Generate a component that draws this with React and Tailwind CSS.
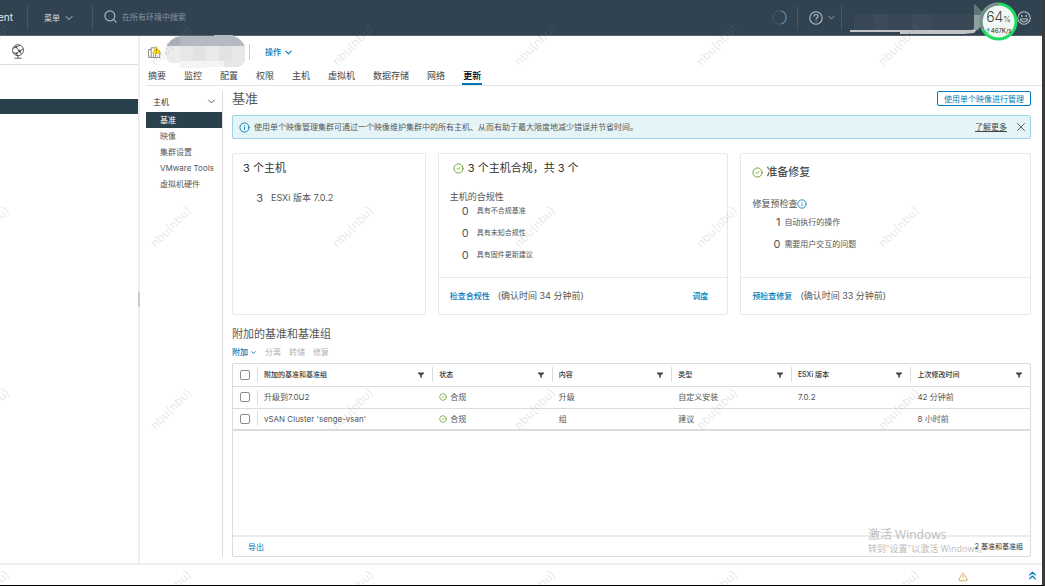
import React, { useState } from "react";
import { ChevronDown, ChevronsUp, CircleCheck, Info, Search, TriangleAlert, X } from "lucide-react";

const tabs = ["摘要", "监控", "配置", "权限", "主机", "虚拟机", "数据存储", "网络", "更新"];
const hostMenu = ["基准", "映像", "集群设置", "VMware Tools", "虚拟机硬件"];

const columns = [
  { key: "name", label: "附加的基准和基准组", width: "w-[22%]" },
  { key: "status", label: "状态", width: "w-[15%]" },
  { key: "content", label: "内容", width: "w-[15%]" },
  { key: "type", label: "类型", width: "w-[15%]" },
  { key: "version", label: "ESXi 版本", width: "w-[15%]" },
  { key: "modified", label: "上次修改时间", width: "w-[15%]" },
];

const baselines = [
  { name: "升级到7.0U2", status: "合规", content: "升级", type: "自定义安装", version: "7.0.2", modified: "42 分钟前" },
  { name: "vSAN Cluster 'senge-vsan'", status: "合规", content: "组", type: "建议", version: "", modified: "8 小时前" },
];

const watermarkX = [-11, 171, 353, 535, 717, 899];
const watermarkY = [45, 227, 409, 591];

const FilterIcon = () => (
  <svg viewBox="0 0 6 6" className="w-[6px] h-[6px] shrink-0" fill="#454545">
    <path d="M0 0.500h6v1L3.800 3.200V6L2.200 5.200V3.200L0 1.500z" />
  </svg>
);

const GlobeIcon = () => (
  <svg viewBox="0 0 14 15" className="w-[14px] h-[15px]" fill="none" stroke="#4c4c4c" strokeWidth="0.9">
    <circle cx="7" cy="6.200" r="5.500" />
    <path d="M2 4.200L5 3.200L8.500 7L12.300 5M5 3.200L9 1.200M8.500 7L5.500 9.500L2 8.500M8.500 7L10.500 10.300M5.500 9.500L6.500 11.500M3.500 14.200h7M7 11.700v2.300" />
    <circle cx="8.500" cy="7" r="0.900" fill="#4c4c4c" />
    <circle cx="5" cy="3.200" r="0.700" fill="#4c4c4c" />
    <circle cx="5.500" cy="9.500" r="0.700" fill="#4c4c4c" />
  </svg>
);

const ClusterIcon = () => (
  <svg viewBox="0 0 13 12" className="w-[13px] h-[12px] shrink-0" fill="none">
    <path d="M3 3.500H.6v7.800H3M3.200 1.800h4.500v9.700H3.200zM8 5h3.800v6.500H8M5.500 8.500v2.500" stroke="#6c6c6c" strokeWidth="0.8" />
    <path d="M8.300.4 12.600 7.400H4.400z" fill="#ffdc0b" stroke="#d5a800" strokeWidth="0.5" />
    <path d="M8.400 2.800v2.200M8.400 5.700v.8" stroke="#6b5600" strokeWidth="0.8" />
  </svg>
);

const HelpIcon = () => (
  <svg viewBox="0 0 14 14" className="w-[14px] h-[14px]" fill="none" stroke="#b6c0c8" strokeWidth="1.100">
    <circle cx="7" cy="7" r="6.200" />
    <path d="M5 5.500c0-2.700 4.100-2.500 4.100-.2C9.100 6.800 7 6.800 7 8.500M7 9.700v1.100" />
  </svg>
);

const SmileIcon = () => (
  <svg viewBox="0 0 14 14" className="w-[14px] h-[14px]" fill="none" stroke="#b6c0c8" strokeWidth="1.100">
    <circle cx="7" cy="7" r="6.200" />
    <path d="M3.500 8h7c-.4 3.700-6.600 3.700-7 0z" />
    <circle cx="4.800" cy="5" r="0.900" fill="#b6c0c8" stroke="none" />
    <circle cx="9.200" cy="5" r="0.900" fill="#b6c0c8" stroke="none" />
  </svg>
);

// title blurred out with large blocks
const MaskedTitle = () => (
  <svg viewBox="0 0 80 33" className="relative w-20 h-[33px] shrink-0 -mt-[2px]">
    <clipPath id="masked-title">
      <path d="M0 17C2 6 10 1 19 1H49V0H66C74 2 79 8 80 12V26C78 30 75 32 72 32H43V33H15V28H6C2 26 0 22 0 17z" />
    </clipPath>
    <g clipPath="url(#masked-title)">
      <rect width="80" height="33" fill="#e7e7e7" />
      <rect width="80" height="11" fill="#b5b9c2" />
      <rect x="0" width="15" height="11" fill="#abb1bb" />
      <rect x="0" y="11" width="15" height="17" fill="#ececec" />
      <rect x="28" y="11" width="13" height="15" fill="#e2e2e2" />
      <rect x="41" y="11" width="13" height="15" fill="#eaeaea" />
      <rect x="54" y="11" width="13" height="15" fill="#e2e2e2" />
      <rect x="15" y="26" width="44" height="7" fill="#f4f4f4" />
    </g>
  </svg>
);

const MaskedUser = () => (
  <svg viewBox="0 0 132 31" className="w-[132px] h-[31px] shrink-0 mt-[4px]">
    <path d="M4 10H125V27H4z" fill="#394857" />
    <path d="M24 10h14v17H24zM62 10h20v17H62z" fill="#3c4b59" />
    <path d="M0 26H122L126 24L130 18V22L124 29L114 30H50V28H0z" fill="#c2c4c6" />
    <path d="M124 0L132 8V20L128 26L124 26z" fill="#8fa09f" />
    <path d="M124 0L132 8V11H124z" fill="#627579" />
  </svg>
);

const SpeedBadge = () => (
  <div className="relative w-[39px] h-[39px] shrink-0 mt-[8px] -ml-[3px]">
    <svg viewBox="0 0 39 39" className="absolute inset-0 w-full h-full">
      <circle cx="19.500" cy="19.500" r="17.500" fill="#f1f7f2" stroke="#1fdc60" strokeWidth="3" />
      <path d="M4 27.500A17.500 17.500 0 0 1 19.500 2" fill="none" stroke="#7e8c93" strokeWidth="3" />
    </svg>
    <div className="relative flex flex-col items-center pt-[7px] text-[#444]">
      <span className="text-[14px] leading-[16px] font-light">64<span className="text-[8px]">%</span></span>
      <span className="text-[6px] leading-[8px] font-medium"><span className="text-[#1687e0]">↑</span>467K/s</span>
    </div>
  </div>
);

const Header = () => (
  <header className="flex items-center h-9 bg-[#314351] border-b border-[#54636f] text-[#adbac4]">
    <div className="w-[29px] shrink-0 text-[10px] leading-[14px] text-[#e3e8eb] -ml-[2px] -mt-[2px]">ent</div>
    <div className="w-px h-6 bg-[#465867] shrink-0" />
    <button className="flex items-center gap-[3px] w-16 pl-4 text-[8px] leading-[12px] text-[#d3dbe0] shrink-0">
      菜单 <ChevronDown size={12} strokeWidth={1.800} className="shrink-0" />
    </button>
    <div className="w-px h-6 bg-[#465867] shrink-0" />
    <label className="flex items-center gap-1 pl-[10px] pb-[2px] grow">
      <Search size={15} strokeWidth={1.800} className="shrink-0" />
      <input aria-label="搜索" placeholder="在所有环境中搜索" className="w-48 bg-transparent text-[8px] leading-[12px] outline-none placeholder:text-[#8795a1]" />
    </label>
    <div className="flex items-center h-full shrink-0">
      <svg viewBox="0 0 15 15" className="w-[15px] h-[15px]" fill="none">
        <circle cx="7.500" cy="7.500" r="6.700" stroke="#465968" />
        <path d="M9 1A6.700 6.700 0 0 1 9 14" stroke="#5590b5" strokeWidth="1.200" />
      </svg>
      <div className="w-px h-6 ml-[10px] bg-[#465867]" />
      <button aria-label="帮助" className="flex items-center gap-[3px] ml-[11px]">
        <HelpIcon />
        <ChevronDown size={11} strokeWidth={1.800} />
      </button>
      <div className="w-px h-6 ml-[4px] mr-[8px] bg-[#465867]" />
      <MaskedUser />
      <SpeedBadge />
      <button aria-label="反馈" className="-ml-px mr-[11px]">
        <SmileIcon />
      </button>
    </div>
  </header>
);

const Count = ({ value, label, className }) => (
  <li className="flex items-center h-4">
    <span className="w-[10px] text-right text-[11px] leading-[16px]">{value}</span>
    <span className={className}>{label}</span>
  </li>
);

const Cards = () => (
  <div className="grid grid-cols-[194fr_291fr_291fr] gap-3 mt-[14px]">
    <section className="min-h-[162px] border border-[#e8e8e8] rounded-xs px-[10px] pt-[6px]">
      <h2 className="text-[11px] leading-[16px] text-[#333]">3 个主机</h2>
      <ul className="mt-[14px] pl-[10px]">
        <Count value="3" label="ESXi 版本 7.0.2" className="ml-[8px] text-[9px]" />
      </ul>
    </section>

    <section className="flex flex-col min-h-[162px] border border-[#e8e8e8] rounded-xs">
      <div className="grow px-[11px] pt-[6px]">
        <h2 className="flex items-center gap-1 pl-[3px] text-[11px] leading-[16px] text-[#333]">
          <CircleCheck size={11} strokeWidth={2} className="text-[#62a420] mt-px" />
          3 个主机合规，共 3 个
        </h2>
        <p className="mt-[15px] text-[9px] leading-[12px]">主机的合规性</p>
        <ul className="flex flex-col gap-[6px] pl-[9px]">
          <Count value="0" label="具有不合规基准" className="ml-[8px] text-[7px]" />
          <Count value="0" label="具有未知合规性" className="ml-[8px] text-[7px]" />
          <Count value="0" label="具有固件更新建议" className="ml-[8px] text-[7px]" />
        </ul>
      </div>
      <div className="flex items-center h-[37px] border-t border-[#e8e8e8] pl-[11px] pr-[19px]">
        <button className="text-[8px] font-medium text-[#0079b8]">检查合规性</button>
        <span className="ml-2 text-[9px] grow">(确认时间 34 分钟前)</span>
        <button className="text-[8px] font-medium text-[#0079b8]">调度</button>
      </div>
    </section>

    <section className="flex flex-col min-h-[162px] border border-[#e8e8e8] rounded-xs">
      <div className="grow px-[11px] pt-[10px]">
        <h2 className="flex items-center gap-[3px] text-[11px] leading-[16px] text-[#333]">
          <CircleCheck size={11} strokeWidth={2} className="text-[#62a420]" />
          准备修复
        </h2>
        <p className="flex items-center mt-[18px] text-[9px] leading-[12px]">
          修复预检查<Info size={10} strokeWidth={2} className="text-[#0079b8]" />
        </p>
        <ul className="flex flex-col gap-[6px] mt-[4px] pl-[18px]">
          <Count value="1" label="自动执行的操作" className="ml-[4px] text-[8px]" />
          <Count value="0" label="需要用户交互的问题" className="ml-[4px] text-[8px]" />
        </ul>
      </div>
      <div className="flex items-center h-[37px] border-t border-[#e8e8e8] px-[11px]">
        <button className="text-[8px] font-medium text-[#0079b8]">预检查修复</button>
        <span className="ml-2 text-[9px]">(确认时间 33 分钟前)</span>
      </div>
    </section>
  </div>
);

const checkboxClass = "block appearance-none w-[10px] h-[10px] ml-[7px] border border-[#8c8c8c] rounded-xs bg-white checked:bg-[#0079b8]";

const BaselineTable = () => {
  const [selected, setSelected] = useState([]);

  const toggle = (name) => {
    setSelected(selected.includes(name) ? selected.filter((n) => n !== name) : [...selected, name]);
  };

  const toggleAll = () => {
    setSelected(selected.length === baselines.length ? [] : baselines.map((b) => b.name));
  };

  return (
    <div className="flex flex-col grow mt-[5px] border border-[#dcdcdc] rounded-xs">
      <table className="w-full table-fixed border-collapse">
        <thead>
          <tr className="h-[22px] border-b border-[#dcdcdc]">
            <th className="w-[22px] p-0">
              <input type="checkbox" aria-label="全选" className={checkboxClass} checked={selected.length === baselines.length} onChange={toggleAll} />
            </th>
            {columns.map((col) => (
              <th key={col.key} className={`${col.width} p-0`}>
                <div className="flex items-center justify-between h-[15px] pl-[6px] pr-[8px] border-l border-[#dcdcdc] text-[7px] leading-[12px] font-medium text-[#333]">
                  {col.label}
                  <FilterIcon />
                </div>
              </th>
            ))}
          </tr>
        </thead>
        <tbody className="text-[8px] leading-[12px]">
          {baselines.map((row) => (
            <tr key={row.name} className="h-[22px] border-b border-[#dcdcdc] last:border-b-2">
              <td className="p-0">
                <input type="checkbox" aria-label={row.name} className={checkboxClass} checked={selected.includes(row.name)} onChange={() => toggle(row.name)} />
              </td>
              {columns.map((col) => (
                <td key={col.key} className="p-0">
                  <div className={`flex items-center gap-[3px] h-[15px] pl-[6px] border-l whitespace-nowrap ${col.key === "name" ? "border-[#dcdcdc]" : "border-transparent"}`}>
                    {col.key === "status" && <CircleCheck size={8} strokeWidth={2.200} className="text-[#62a420]" />}
                    {row[col.key]}
                  </div>
                </td>
              ))}
            </tr>
          ))}
        </tbody>
      </table>
      <div className="grow" />
      <div className="flex items-center justify-between h-[21px] border-t-2 border-[#ececec] pl-[15px] pr-[7px] leading-[12px]">
        <button className="text-[8px] text-[#0079b8]">导出</button>
        <span className="relative z-20 text-[7px] text-[#333]">2 基准和基准组</span>
      </div>
    </div>
  );
};

const App = () => {
  const [activeTab, setActiveTab] = useState("更新");
  const [activeItem, setActiveItem] = useState("基准");

  return (
    <div className="relative flex flex-col min-h-screen overflow-hidden bg-white text-[#565656] text-[8px] border-r-[3px] border-r-[#3a3a3a] border-b border-b-black font-['Inter','Noto_Sans_CJK_SC',sans-serif]">
      <Header />

      <div className="flex grow">
        <aside className="flex flex-col w-[140px] shrink-0 border-r-2 border-[#eeeeee]">
          <div className="flex items-center h-[29px] pl-[11px] pt-[3px] border-b border-[#dddddd]">
            <GlobeIcon />
          </div>
          <div className="h-[15px] mt-[34px] bg-[#29414a]" />
          <div className="w-[2px] h-[15px] mt-[178px] -mr-[2px] ml-auto bg-[#cccccc]" />
        </aside>

        <div className="flex flex-col grow min-w-0 pl-[6px]">
          <div className="flex items-center h-8 pl-[2px]">
            <ClusterIcon />
            <div className="ml-[4px]"><MaskedTitle /></div>
            <div className="w-px h-4 ml-[4px] bg-[#cccccc]" />
            <button className="flex items-center gap-[2px] ml-[15px] text-[8px] font-medium text-[#0079b8]">
              操作 <ChevronDown size={11} strokeWidth={2.200} />
            </button>
          </div>

          <nav className="flex gap-4 pl-px border-b border-[#e4e4e4]">
            {tabs.map((tab) => (
              <button
                key={tab}
                onClick={() => setActiveTab(tab)}
                className={`px-px text-[9px] leading-[15px] border-b-2 whitespace-nowrap ${tab === activeTab ? "border-[#0079b8] text-black font-medium" : "border-transparent text-[#454545]"}`}
              >
                {tab}
              </button>
            ))}
          </nav>

          <div className="flex grow pt-[5px] pb-[6px]">
            <nav className="w-[77px] shrink-0 border-r border-[#dddddd] leading-[16px]">
              <button className="flex items-center justify-between w-full h-[21px] pl-[7px] pr-[5px] text-[8px] text-[#333]">
                主机 <ChevronDown size={11} strokeWidth={1.800} />
              </button>
              {hostMenu.map((item) => (
                <button
                  key={item}
                  onClick={() => setActiveItem(item)}
                  className={`block w-full h-4 pl-[14px] text-left whitespace-nowrap ${item === activeItem ? "bg-[#29414a] text-white" : ""}`}
                >
                  {item}
                </button>
              ))}
            </nav>

            <main className="flex flex-col grow min-w-0 pl-[9px] pr-[11px]">
              <div className="flex items-start justify-between h-4">
                <h1 className="text-[13px] leading-[14px]">基准</h1>
                <button className="h-[15px] px-[6px] border border-[#0079b8] rounded-xs text-[8px] leading-[12px] text-[#0079b8]">使用单个映像进行管理</button>
              </div>

              <div className="flex items-center h-6 mt-2 pl-[6px] pr-[2px] bg-[#e5f5f7] border border-[#9bd5ea] rounded-xs leading-[12px]">
                <Info size={11} strokeWidth={2} className="text-[#0079b8] shrink-0" />
                <p className="ml-1 grow pb-px">使用单个映像管理集群可通过一个映像维护集群中的所有主机、从而有助于最大限度地减少错误并节省时间。</p>
                <a href="#more" className="underline text-[#454545]">了解更多</a>
                <button aria-label="关闭" className="ml-[7px]">
                  <X size={14} strokeWidth={1.600} />
                </button>
              </div>

              <Cards />

              <h2 className="mt-[11px] text-[11px] leading-[16px]">附加的基准和基准组</h2>
              <div className="flex items-center gap-2 mt-1 leading-[12px] text-[#b0b0b0]">
                <button className="flex items-center gap-[2px] font-medium text-[#0079b8]">
                  附加 <ChevronDown size={7} strokeWidth={3} />
                </button>
                <button disabled>分离</button>
                <button disabled>转储</button>
                <button disabled>修复</button>
              </div>

              <BaselineTable />
            </main>
          </div>
        </div>
      </div>

      <footer className="flex items-center justify-end h-[22px] pr-[3px] border-t-2 border-[#eeeeee]">
        <TriangleAlert size={10} strokeWidth={1.800} className="text-[#c99a24] mt-1" />
        <button aria-label="展开" className="ml-[58px]">
          <ChevronsUp size={13} strokeWidth={2.200} className="text-[#0079b8]" />
        </button>
      </footer>

      <div className="absolute right-[53px] bottom-[30px] z-10 w-[121px] text-[#bdbdbd] pointer-events-none whitespace-nowrap font-['Open_Sans','Noto_Sans_CJK_SC',sans-serif]">
        <p className="text-[12px] leading-[16px]">激活 Windows</p>
        <p className="text-[9px] leading-[12px]">转到"设置"以激活 Windows。</p>
      </div>

      <div aria-hidden="true" className="absolute inset-0 overflow-hidden pointer-events-none">
        {watermarkY.map((y) => watermarkX.map((x) => (
          <span
            key={`${x}-${y}`}
            className="absolute -translate-x-1/2 -translate-y-1/2 -rotate-45 text-[12px] leading-[12px] text-[#808080]/20"
            style={{ left: x, top: y }}
          >
            nbu(nbu)
          </span>
        )))}
      </div>
    </div>
  );
};

export default App;
